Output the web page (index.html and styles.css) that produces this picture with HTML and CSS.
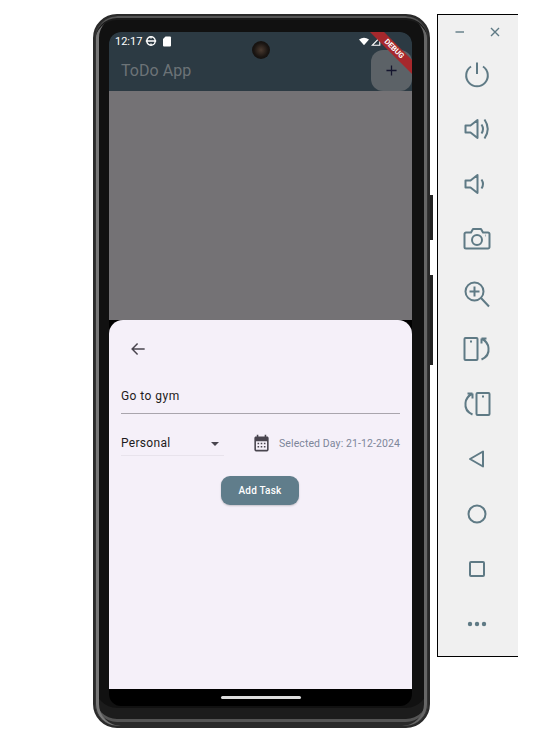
FILE: index.html
```html
<!DOCTYPE html>
<html lang="en">
<head>
    <meta charset="UTF-8">
    <meta name="viewport" content="width=device-width, initial-scale=1.0">
    <title>ToDo App</title>
    <link rel="stylesheet" href="styles.css">
</head>
<body>
    <div class="desktop">
        <div class="phone">
            <span class="side-btn side-btn-power"></span>
            <span class="side-btn side-btn-volume"></span>
            <div class="screen">
                <header class="topbar">
                    <div class="statusbar">
                        <span class="clock">12:17</span>
                        <svg class="status-icon" viewBox="0 0 12 12"><circle cx="6" cy="6" r="4.200" fill="none" stroke="#fff" stroke-width="1.400"/><path d="M.8 6h10.400M6 1.500v2M6 8.500v2" stroke="#fff" stroke-width="1.300"/></svg>
                        <svg class="status-card" viewBox="0 0 10 12"><path d="M3.500 1.500h4.500a1 1 0 0 1 1 1v8a1 1 0 0 1-1 1H2a1 1 0 0 1-1-1V4z" fill="#fff"/></svg>
                        <span class="status-spacer"></span>
                        <svg class="status-wifi" viewBox="0 0 12 10"><path d="M0 2.600Q6-1.600 12 2.600L6 9.500z" fill="#fff"/></svg>
                        <svg class="status-signal" viewBox="0 0 10 10"><path d="M8.800 1.500V9.300H1.200z" fill="none" stroke="#fff" stroke-width="1.100"/></svg>
                    </div>
                    <div class="appbar">
                        <span class="app-title">ToDo App</span>
                        <button class="add-btn"><svg class="plus-icon" viewBox="0 0 12 12"><path d="M6 .5v11M.5 6h11"/></svg></button>
                    </div>
                </header>
                <div class="scrim"></div>
                <section class="sheet">
                    <div class="back-row">
                        <svg class="back-icon" viewBox="0 0 24 24"><path d="M20 12H5M11.500 5.500 5 12l6.500 6.500" fill="none" stroke="#49454f" stroke-width="1.800"/></svg>
                    </div>
                    <div class="task-input">Go to gym</div>
                    <div class="options-row">
                        <div class="dropdown">
                            <span>Personal</span>
                            <span class="caret"></span>
                        </div>
                        <div class="date-picker">
                            <svg class="calendar-icon" viewBox="0 0 24 24"><path fill="#49454f" d="M19 3h-1V1h-2v2H8V1H6v2H5c-1.100 0-2 .9-2 2v15c0 1.100.9 2 2 2h14c1.100 0 2-.9 2-2V5c0-1.100-.9-2-2-2zm0 17H5V9h14v11zM9 13H7v-2h2v2zm4 0h-2v-2h2v2zm4 0h-2v-2h2v2zm-8 4H7v-2h2v2zm4 0h-2v-2h2v2zm4 0h-2v-2h2v2z"/></svg>
                            <span class="date-label">Selected Day: 21-12-2024</span>
                        </div>
                    </div>
                    <div class="action-row">
                        <button class="submit-btn">Add Task</button>
                    </div>
                </section>
                <div class="navbar"><span class="nav-handle"></span></div>
                <span class="camera"></span>
                <span class="debug-ribbon">DEBUG</span>
            </div>
        </div>

        <aside class="tools">
            <div class="tools-title">
                <svg class="win-icon" viewBox="0 0 12 12"><path d="M1.500 6h8.500"/></svg>
                <svg class="win-icon" viewBox="0 0 12 12"><path d="M2 2l8 8M10 2l-8 8"/></svg>
            </div>
            <div class="tool"><svg viewBox="0 0 28 28"><path d="M14 2.500V14M8 6.500a10.800 10.800 0 1 0 12 0"/></svg></div>
            <div class="tool"><svg viewBox="0 0 28 28"><path d="M2.500 10.500v7h5l7 5.500V5l-7 5.500zM18.500 9.500q3 4.500 0 9M21.500 4.500q6.500 9.500 0 19"/></svg></div>
            <div class="tool"><svg viewBox="0 0 28 28"><path d="M2.500 10.500v7h5l7 5.500V5l-7 5.500zM18.500 9.500q3 4.500 0 9"/></svg></div>
            <div class="tool"><svg viewBox="0 0 28 28"><path d="M3 7.500h5l2-3.500h8l2 3.500h5a1.500 1.500 0 0 1 1.500 1.500v13a1.500 1.500 0 0 1-1.500 1.500H3A1.500 1.500 0 0 1 1.500 22V9A1.500 1.500 0 0 1 3 7.500z"/><circle cx="14" cy="15" r="5"/><path d="M22.500 10.500h.5"/></svg></div>
            <div class="tool"><svg viewBox="0 0 28 28"><circle cx="11.500" cy="11.500" r="9"/><path d="M11.500 6.500v10M6.500 11.500h10M18 18l8 8.500"/></svg></div>
            <div class="tool"><svg viewBox="0 0 28 28"><rect x="1.500" y="3" width="13" height="22" rx="1"/><path d="M7 6.500h2M18.500 24.500q8-3.500 7-11.500-.5-6-7-9.500M18.500 3.500h5M18.500 3.500v5"/></svg></div>
            <div class="tool"><svg viewBox="0 0 28 28"><rect x="13.500" y="3" width="13" height="22" rx="1"/><path d="M19 6.500h2M9.500 24.500q-8-3.500-7-11.500 .5-6 7-9.500M9.500 3.500h-5M9.500 3.500v5"/></svg></div>
            <div class="tool"><svg viewBox="0 0 28 28"><path d="M7 14l13-7.500v15z"/></svg></div>
            <div class="tool"><svg viewBox="0 0 28 28"><circle cx="14" cy="14" r="8.500"/></svg></div>
            <div class="tool"><svg viewBox="0 0 28 28"><rect x="7" y="7" width="14" height="14" rx="1"/></svg></div>
            <div class="tool"><svg viewBox="0 0 28 28"><circle class="dot" cx="7" cy="14" r="2.200"/><circle class="dot" cx="14" cy="14" r="2.200"/><circle class="dot" cx="21" cy="14" r="2.200"/></svg></div>
        </aside>
    </div>
</body>
</html>
```

FILE: styles.css
```css
* {
    box-sizing: border-box;
}

body {
    margin: 0;
    background-color: #fff;
    font-family: Roboto, "Liberation Sans", sans-serif;
}

.desktop {
    display: flex;
    align-items: flex-start;
    padding: 14px 0 0 93px;
}

/* phone frame */
.phone {
    position: relative;
    width: 337px;
    height: 714px;
    padding: 18px 18px 22px 16px;
    background-color: #111;
    border: 2px solid #2a2a2a;
    border-radius: 24px;
    box-shadow:
        inset 1px 0 0 #333, inset -1px 0 0 #333,
        inset 0 2px 0 #555, inset 0 4px 0 #1a1a1a,
        inset 4px 0 0 #777, inset -4px 0 0 #666,
        inset 0 -4px 0 #2a2a2a, inset 0 -7px 0 #555, inset 0 -18px 0 #1c1c1c;
}

.side-btn {
    position: absolute;
    right: -5px;
    width: 3px;
    background-color: #222;
}

.side-btn-power {
    top: 179px;
    height: 45px;
}

.side-btn-volume {
    top: 259px;
    height: 90px;
}

.screen {
    position: relative;
    display: flex;
    flex-direction: column;
    width: 303px;
    height: 674px;
    margin: -2px 0 0 -2px;
    overflow: hidden;
    background-color: #000;
    border-radius: 12px;
}

.topbar {
    height: 59px;
    flex-shrink: 0;
    background-color: #2c3a43;
}

.statusbar {
    display: flex;
    align-items: center;
    height: 18px;
    padding: 0 0 0 6px;
    color: #fff;
    font-size: 11px;
}

.status-icon {
    width: 12px;
    height: 12px;
    margin-left: 3px;
}

.status-card {
    width: 10px;
    height: 12px;
    margin-left: 5px;
}

.status-spacer {
    flex: 1;
}

.status-wifi {
    width: 10px;
    height: 9px;
}

.status-signal {
    width: 10px;
    height: 10px;
    margin: 0 31px 0 2px;
}

.appbar {
    display: flex;
    align-items: center;
    justify-content: space-between;
    height: 41px;
    padding-left: 12px;
}

.app-title {
    margin-top: -1px;
    color: #6c7377;
    font-size: 16px;
    letter-spacing: 0.05px;
}

.add-btn {
    display: flex;
    align-items: center;
    justify-content: center;
    width: 41px;
    height: 41px;
    padding: 0;
    border: none;
    border-radius: 12px;
    background-color: #5c6267;
}

.plus-icon {
    width: 11px;
    height: 11px;
    fill: none;
    stroke: #14152e;
    stroke-width: 1.4;
}

.scrim {
    flex: 1;
    background-color: #747275;
}

/* bottom sheet */
.sheet {
    height: 369px;
    flex-shrink: 0;
    padding: 0 12px;
    background-color: #f5f0f9;
    border-radius: 14px 14px 0 0;
}

.back-row {
    display: flex;
    align-items: center;
    height: 58px;
    padding-left: 7px;
}

.back-icon {
    width: 20px;
    height: 20px;
    margin-top: -1px;
}

.task-input {
    height: 36px;
    padding: 10px 0 0 0;
    border-bottom: 1px solid #a9a5ad;
    color: #1d1b20;
    font-size: 12px;
    letter-spacing: 0.45px;
    line-height: 16px;
}

.options-row {
    display: flex;
    align-items: flex-start;
    justify-content: space-between;
    margin-top: 19px;
}

.dropdown {
    display: flex;
    align-items: center;
    justify-content: space-between;
    width: 103px;
    height: 23px;
    padding: 0 5px 3px 0;
    border-bottom: 1px solid #e8e3ec;
    color: #1d1b20;
    font-size: 12px;
    letter-spacing: 0.3px;
}

.caret {
    width: 0;
    height: 0;
    margin-top: 2px;
    border-left: 4px solid transparent;
    border-right: 4px solid transparent;
    border-top: 4px solid #49454f;
}

.date-picker {
    display: flex;
    align-items: center;
    height: 20px;
}

.calendar-icon {
    width: 19px;
    height: 19px;
    margin: 1px 8px 0 0;
}

.date-label {
    color: #7d8699;
    font-size: 10.5px;
    letter-spacing: 0.1px;
}

.action-row {
    display: flex;
    justify-content: center;
    margin-top: 20px;
}

.submit-btn {
    width: 78px;
    height: 29px;
    margin-right: 1px;
    padding: 0;
    border: none;
    border-radius: 9px;
    background-color: #607d8b;
    box-shadow: 0 1px 2px rgba(0, 0, 0, 0.2);
    color: #fff;
    font-family: inherit;
    font-size: 10px;
    font-weight: 500;
    letter-spacing: 0.2px;
}

.navbar {
    display: flex;
    justify-content: center;
    height: 17px;
    flex-shrink: 0;
    padding-top: 7px;
}

.nav-handle {
    width: 80px;
    height: 3px;
    border-radius: 2px;
    background-color: #ddd;
}

/* things lying over the screen */
.camera {
    position: absolute;
    top: 9px;
    left: 143px;
    width: 18px;
    height: 18px;
    border-radius: 50%;
    background: radial-gradient(circle at 50% 50%, #4a3a30 0, #1a1512 55%, #0a0a0a 100%);
}

.debug-ribbon {
    position: absolute;
    top: 12px;
    right: -19px;
    width: 74px;
    height: 10px;
    background-color: #a6282c;
    color: #fff;
    font-size: 7.5px;
    font-weight: 700;
    line-height: 10px;
    text-align: center;
    transform: rotate(45deg);
}

/* emulator tools */
.tools {
    width: 81px;
    height: 643px;
    margin-left: 7px;
    background-color: #f0f0f0;
    border: 1px solid #000;
    border-right: none;
}

.tools-title {
    display: flex;
    align-items: center;
    justify-content: space-between;
    height: 31px;
    padding: 3px 17px 0 16px;
}

.win-icon {
    width: 12px;
    height: 12px;
    fill: none;
    stroke: #5f7a85;
    stroke-width: 1.4;
}

.tool {
    display: flex;
    align-items: center;
    justify-content: center;
    height: 55px;
    padding-right: 2px;
}

.tool svg {
    width: 28px;
    height: 28px;
    fill: none;
    stroke: #5f7a85;
    stroke-width: 2;
    stroke-linejoin: round;
}

.tool .dot {
    fill: #5f7a85;
    stroke: none;
}
```
